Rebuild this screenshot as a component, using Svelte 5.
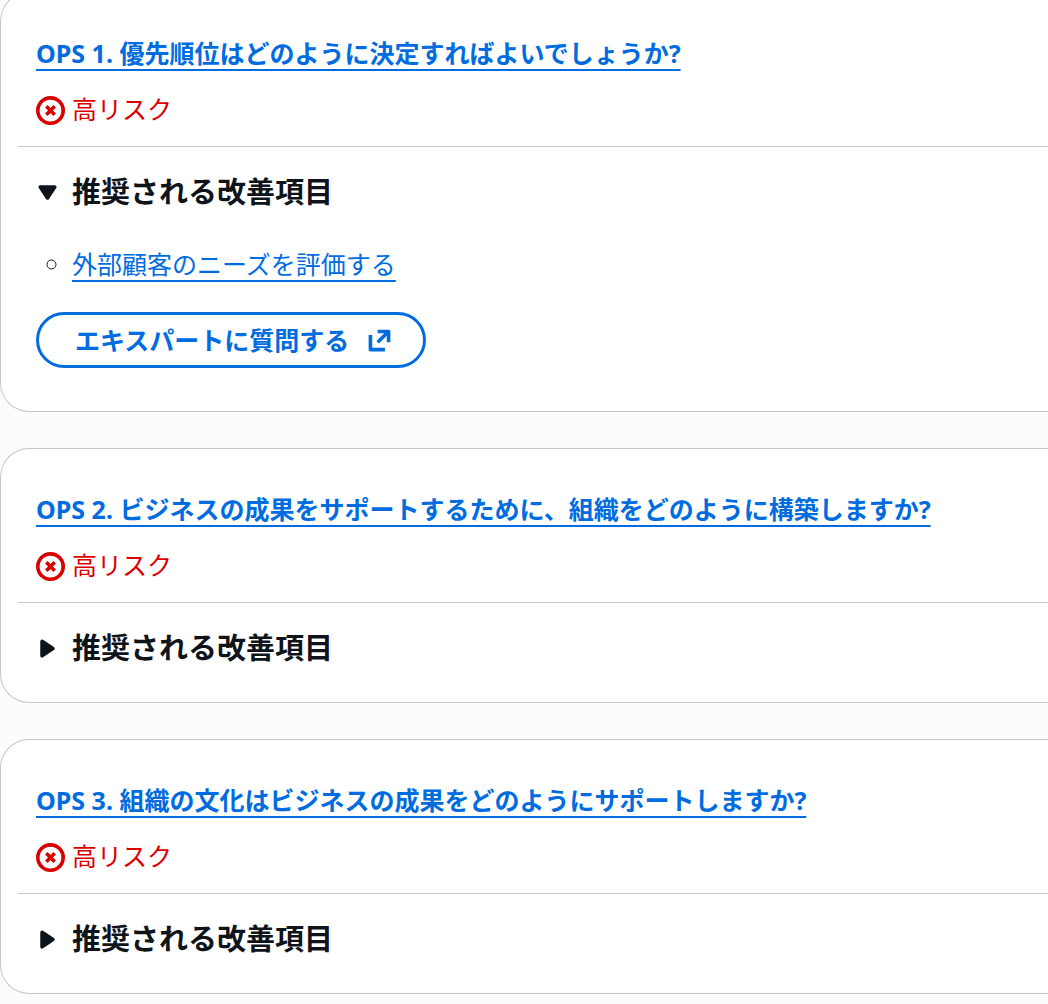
<script lang="ts">
  type Question = {
    id: number;
    title: string;
    open: boolean;
    improvements: string[];
  };

  let questions = $state<Question[]>([
    {
      id: 1,
      title: "OPS 1. 優先順位はどのように決定すればよいでしょうか?",
      open: true,
      improvements: ["外部顧客のニーズを評価する"]
    },
    {
      id: 2,
      title: "OPS 2. ビジネスの成果をサポートするために、組織をどのように構築しますか?",
      open: false,
      improvements: []
    },
    {
      id: 3,
      title: "OPS 3. 組織の文化はビジネスの成果をどのようにサポートしますか?",
      open: false,
      improvements: []
    }
  ]);
</script>

<main class="questions" lang="ja">
  {#each questions as question (question.id)}
    <section class="card">
      <header class="card-header">
        <h2><a class="link" href="#ops-{question.id}">{question.title}</a></h2>
        <div class="risk">
          <svg viewBox="0 0 16 16" aria-hidden="true">
            <circle cx="8" cy="8" r="7" />
            <path d="m10.3 5.7-4.6 4.6M5.7 5.7l4.6 4.6" />
          </svg>
          <span>高リスク</span>
        </div>
      </header>

      <details bind:open={question.open}>
        <summary>
          <svg class="caret" viewBox="0 0 16 16" aria-hidden="true">
            <path d="M4 5h8l-4 6-4-6z" />
          </svg>
          <h3>推奨される改善項目</h3>
        </summary>
        {#if question.open}
          <div class="details-body">
            <ul>
              {#each question.improvements as item}
                <li><a class="link" href="#improvement">{item}</a></li>
              {/each}
            </ul>
            <a class="button" href="#expert">
              <span>エキスパートに質問する</span>
              <svg viewBox="0 0 16 16" aria-hidden="true">
                <path d="M7 3h6v6M13 3 7 9" />
                <path d="M3 5v8h8" />
              </svg>
            </a>
          </div>
        {/if}
      </details>
    </section>
  {/each}
</main>

<style>
  :global(body) {
    margin: 0;
    background: #fcfcfd;
  }

  .questions {
    display: flex;
    flex-direction: column;
    gap: 36px;
    margin-top: -8px;
    color: #0f141a;
    font-family: "Noto Sans", "Noto Sans CJK JP", sans-serif;
    font-size: 25px;
    line-height: 36px;
  }

  .card {
    background: #fff;
    border: 1px solid #c6c6cd;
    border-right: 0;
    border-radius: 29px 0 0 29px;
  }

  .card-header {
    display: flex;
    flex-direction: column;
    gap: 20px;
    margin-left: 17px;
    padding: 42px 18px 19px;
    border-bottom: 1px solid #c6c6cd;
  }

  h2,
  h3 {
    margin: 0;
    font-weight: 700;
  }

  h2 {
    font-size: 25px;
  }

  h3 {
    font-size: 29px;
  }

  .link {
    color: #006ce0;
    text-decoration: underline;
    text-decoration-thickness: 2px;
    text-decoration-skip-ink: none;
    text-underline-offset: 6px;
  }

  .risk {
    display: flex;
    align-items: flex-end;
    gap: 7px;
    color: #db0000;
  }

  .risk svg {
    width: 29px;
    height: 29px;
    margin-bottom: 2px;
    fill: none;
    stroke: currentColor;
    stroke-width: 2;
  }

  summary {
    display: flex;
    align-items: center;
    gap: 7px;
    padding: 27px 35px 36px;
    list-style: none;
    cursor: pointer;
  }

  .caret {
    width: 29px;
    height: 29px;
    margin-left: -3px;
    margin-right: 3px;
    fill: currentColor;
    stroke: currentColor;
    stroke-width: 2;
    stroke-linejoin: round;
    transform: rotate(-90deg);
  }

  details[open] .caret {
    transform: none;
  }

  .details-body {
    padding: 0 35px 43px;
  }

  ul {
    margin: 0 0 30px;
    padding-left: 36px;
    list-style: circle;
  }

  .button {
    display: inline-flex;
    align-items: center;
    gap: 16px;
    padding: 7px 29px 7px 36px;
    border: 3px solid #006ce0;
    border-radius: 36px;
    color: #006ce0;
    font-weight: 700;
    text-decoration: none;
  }

  .button svg {
    width: 29px;
    height: 29px;
    fill: none;
    stroke: currentColor;
    stroke-width: 2;
    stroke-linejoin: round;
  }
</style>
